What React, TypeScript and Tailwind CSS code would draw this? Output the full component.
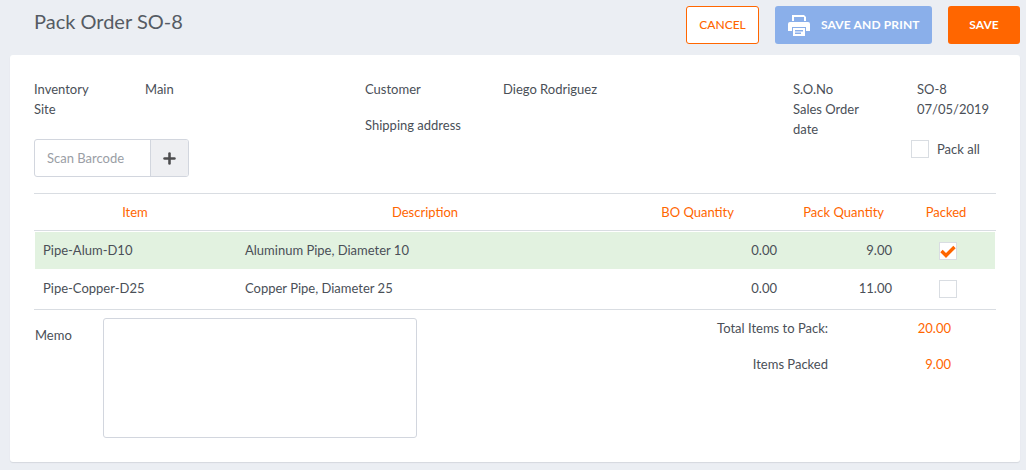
import { Plus } from "lucide-react";

const orange = "text-[#ff6600]";

function Box({ checked }: { checked?: boolean }) {
  return (
    <span className="flex h-[18px] w-[18px] items-center justify-center border border-[#d9dde2] bg-white">
      {checked && (
        <svg viewBox="0 0 16 16" className="h-[16px] w-[16px]">
          <path d="M1.5 8 L6 12.5 L14.5 4" fill="none" stroke="#ff6600" strokeWidth="3.4" />
        </svg>
      )}
    </span>
  );
}

function Row({ item, desc, bo, pack, checked, className }: { item: string; desc: string; bo: string; pack: string; checked?: boolean; className: string }) {
  return (
    <div className={`mx-px flex items-center ${className}`}>
      <div className="mb-0.5 w-[201px] pl-2">{item}</div>
      <div className="mb-0.5 w-[420px] pl-[9px]">{desc}</div>
      <div className="mb-0.5 w-[121px] text-right">{bo}</div>
      <div className="mb-0.5 w-[115px] text-right">{pack}</div>
      <div className="flex flex-1 justify-center pl-[9px]">
        <Box checked={checked} />
      </div>
    </div>
  );
}

export default function App() {
  return (
    <div className="h-[470px] w-[1026px] overflow-hidden bg-[#ebeef3] text-[13px] leading-5 text-[#4a4f57] font-['Lato','Open_Sans',sans-serif]">
      <div className="flex h-[55px] items-start justify-between pr-[6px] pl-[34px] pt-[6px]">
        <h1 className="mt-[3px] text-[20px] leading-6 text-[#555b63]">Pack Order SO-8</h1>
        <div className="flex">
          <button className={`h-[38px] w-[73px] rounded-[3px] border border-[#ff6600] bg-white text-xs font-medium ${orange}`}>CANCEL</button>
          <button className="ml-4 flex h-[38px] w-[157px] items-center rounded-[3px] bg-[#8aafea] pl-[13px] text-xs font-bold text-white">
            <svg viewBox="0 0 22 22" className="h-[22px] w-[22px]" fill="currentColor">
              <path fillRule="evenodd" d="M4 1h12l2 2v4h-2V3H6v4H4zM2 8h18a2 2 0 0 1 2 2v7h-4v-4H4v4H0v-7a2 2 0 0 1 2-2zM5 14h12v8H5zM7 16v1.4h8V16zM7 18.6V20h6v-1.4z" />
            </svg>
            <span className="ml-[11px] tracking-[0.15px]">SAVE AND PRINT</span>
          </button>
          <button className="ml-4 h-[38px] w-[72px] rounded-[3px] bg-[#ff6600] text-xs font-bold text-white">SAVE</button>
        </div>
      </div>

      <div className="mx-[10px] h-[407px] w-[1010px] rounded-[3px] bg-white px-6 pt-6 shadow-[0_1px_1px_#d5d8de]">
        <div className="flex h-[115px] border-b border-[#d9dde2]">
          <div className="w-[331px]">
            <div className="flex">
              <div className="w-[111px]">Inventory<br />Site</div>
              <div>Main</div>
            </div>
            <div className="mt-5 flex h-[38px] w-[155px] overflow-hidden rounded-[3px] border border-[#d2d6de]">
              <div className="flex flex-1 items-center pl-3 text-[#9a9ea5]">Scan Barcode</div>
              <div className="flex w-[38px] items-center justify-center border-l border-[#d2d6de] bg-[#eeeff2]">
                <Plus size={17} strokeWidth={3.6} className="text-[#4d4d4f]" />
              </div>
            </div>
          </div>
          <div className="w-[428px]">
            <div className="flex">
              <div className="w-[138px]">Customer</div>
              <div>Diego Rodriguez</div>
            </div>
            <div className="mt-4">Shipping address</div>
          </div>
          <div className="flex-1">
            <div className="flex">
              <div className="w-[124px]">S.O.No<br />Sales Order<br />date</div>
              <div>
                SO-8<br />07/05/2019
                <div className="mt-[20px] -ml-[6px] flex items-center">
                  <Box />
                  <span className="ml-2">Pack all</span>
                </div>
              </div>
            </div>
          </div>
        </div>

        <div className={`flex h-[37px] items-center border-b border-[#d9dde2] ${orange}`}>
          <div className="w-[202px] text-center">Item</div>
          <div className="w-[378px] text-center">Description</div>
          <div className="w-[120px] text-right">BO Quantity</div>
          <div className="w-[150px] text-right">Pack Quantity</div>
          <div className="flex-1 pl-[12px] text-center">Packed</div>
        </div>

        <Row item="Pipe-Alum-D10" desc="Aluminum Pipe, Diameter 10" bo="0.00" pack="9.00" checked className="mt-px h-[37px] bg-[#e2f2e0]" />
        <Row item="Pipe-Copper-D25" desc="Copper Pipe, Diameter 25" bo="0.00" pack="11.00" className="h-[40px]" />

        <div className="flex border-t border-[#d9dde2] pt-2">
          <div className="mt-[7px] w-[69px] pl-px">Memo</div>
          <div className="h-[120px] w-[314px] rounded-[3px] border border-[#d2d6de]" />
          <div className="w-[411px] text-right">
            <div>Total Items to Pack:</div>
            <div className="mt-4">Items Packed</div>
          </div>
          <div className={`w-[123px] text-right ${orange}`}>
            <div>20.00</div>
            <div className="mt-4">9.00</div>
          </div>
        </div>
      </div>
    </div>
  );
}
